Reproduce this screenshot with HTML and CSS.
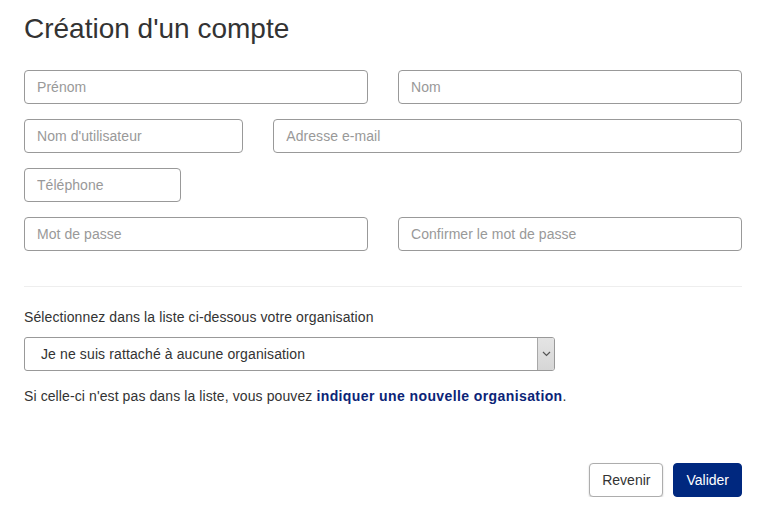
FILE: index.html
```html
<!DOCTYPE html>
<html lang="fr">
<head>
<meta charset="utf-8">
<title>Création d'un compte</title>
<link rel="stylesheet" href="styles.css">
</head>
<body>
<main class="page">
  <h1 class="title">Création d'un compte</h1>
  <form class="form">
    <div class="grid">
      <input class="field span-6" type="text" placeholder="Prénom">
      <input class="field span-6" type="text" placeholder="Nom">
      <input class="field span-4" type="text" placeholder="Nom d'utilisateur">
      <input class="field span-8" type="text" placeholder="Adresse e-mail">
      <input class="field span-3" type="text" placeholder="Téléphone">
      <input class="field span-6 row-start" type="password" placeholder="Mot de passe">
      <input class="field span-6" type="password" placeholder="Confirmer le mot de passe">
    </div>
    <hr class="sep">
    <label class="label">Sélectionnez dans la liste ci-dessous votre organisation</label>
    <div class="grid">
      <div class="select span-9">
        <span class="select-text">Je ne suis rattaché à aucune organisation</span>
        <span class="select-arrow">
          <svg width="9" height="6" viewBox="0 0 9 6"><path d="M1 1 L4.5 4.5 L8 1" fill="none" stroke="#555" stroke-width="1.2"/></svg>
        </span>
      </div>
    </div>
    <p class="hint">Si celle-ci n'est pas dans la liste, vous pouvez <a class="link" href="#">indiquer une nouvelle organisation</a>.</p>
    <div class="actions">
      <button type="button" class="btn btn-default">Revenir</button>
      <button type="button" class="btn btn-primary">Valider</button>
    </div>
  </form>
</main>
</body>
</html>
```
FILE: styles.css
```css
* { box-sizing: border-box; }
html, body { margin: 0; padding: 0; background: #fff; }
body {
  font-family: "Liberation Sans", Arial, sans-serif;
  font-size: 14px;
  color: #333;
}
.page {
  padding: 12px 26px 0 24px;
  width: 768px;
}
.title {
  margin: 0 0 25px 0;
  font-size: 28px;
  font-weight: 400;
  line-height: 33px;
  color: #333;
}
.grid {
  display: grid;
  grid-template-columns: repeat(12, 1fr);
  column-gap: 30px;
  row-gap: 15px;
}
.span-3 { grid-column: span 3; }
.span-4 { grid-column: span 4; }
.span-6 { grid-column: span 6; }
.span-8 { grid-column: span 8; }
.span-9 { grid-column: span 9; }
.row-start { grid-column: 1 / span 6; }
.field {
  height: 34px;
  border: 1px solid #999;
  border-radius: 4px;
  padding: 0 12px;
  font-family: inherit;
  font-size: 14px;
  color: #333;
  background: #fff;
  min-width: 0;
  width: 100%;
  letter-spacing: 0.05px;
}
.field::placeholder { color: #999; }
.sep {
  border: 0;
  border-top: 1px solid #eee;
  margin: 35px 0 20px 0;
}
.label {
  display: block;
  line-height: 20px;
  margin-bottom: 10px;
  letter-spacing: 0.1px;
}
.select {
  height: 34px;
  border: 1px solid #999;
  border-radius: 3px;
  display: flex;
  align-items: stretch;
  background: #fff;
  overflow: hidden;
}
.select-text {
  flex: 1;
  display: flex;
  align-items: center;
  padding-left: 16px;
  letter-spacing: 0.12px;
}
.select-arrow {
  width: 17px;
  display: flex;
  align-items: center;
  justify-content: center;
  background: linear-gradient(#e4e4e4, #d6d6d6);
  border-left: 1px solid #a8a8a8;
}
.hint {
  margin: 15px 0 0 0;
  line-height: 20px;
  letter-spacing: 0.1px;
}
.link {
  color: #0b2477;
  font-weight: 700;
  text-decoration: none;
  letter-spacing: 0.4px;
}
.actions {
  display: flex;
  justify-content: flex-end;
  gap: 10px;
  margin-top: 57px;
}
.btn {
  height: 34px;
  padding: 0 12px;
  font-family: inherit;
  font-size: 14px;
  border-radius: 4px;
  line-height: 20px;
}
.btn-default {
  background: #fff;
  color: #333;
  border: 1px solid #adadad;
  box-shadow: 0 1px 2px rgba(0,0,0,0.2);
}
.btn-primary {
  background: #00287f;
  color: #fff;
  border: 1px solid #00287f;
}
```
